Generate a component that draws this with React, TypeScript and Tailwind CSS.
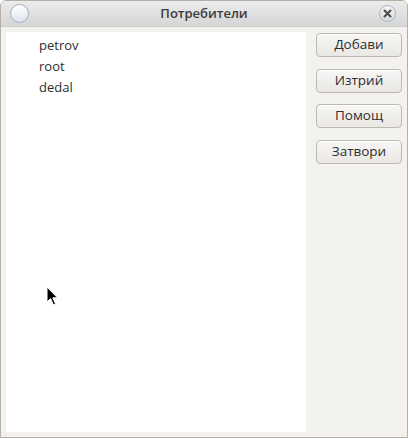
import React from "react";

const font = { fontFamily: '"Open Sans", "DejaVu Sans", sans-serif' };

function Btn({ label }: { label: string }) {
  return (
    <button className="h-[24px] w-[86px] rounded-[4px] border border-[#bcb9b3] bg-gradient-to-b from-[#f8f7f6] to-[#e9e7e3] text-[13.5px] text-[#2e2e2e] leading-none shadow-[inset_0_1px_0_#ffffff]">
      {label}
    </button>
  );
}

export default function App() {
  return (
    <div className="w-[408px] h-[438px] overflow-hidden" style={font}>
      <div className="relative flex h-full w-full flex-col rounded-t-[6px] border border-[#b3b0a9] bg-[#f4f2ef]">
        <div className="relative flex h-[26px] shrink-0 items-center justify-center rounded-t-[5px] bg-gradient-to-b from-[#ececec] to-[#d5d5d5] border-b border-[#cfcdc9]">
          <div className="absolute left-[9px] top-[3px] h-[19px] w-[19px] rounded-full border border-[#9fb0c8] bg-gradient-to-b from-[#ffffff] to-[#dfe3ea]" />
          <span className="text-[13px] font-semibold text-[#3c3c3c]">Потребители</span>
          <div className="absolute right-[11px] top-[4px] flex h-[17px] w-[17px] items-center justify-center rounded-full border border-[#a8b3c4] bg-gradient-to-b from-[#f4f4f4] to-[#d8dbe0]">
            <svg width="9" height="9" viewBox="0 0 9 9">
              <path d="M1.5 1.5 L7.5 7.5 M7.5 1.5 L1.5 7.5" stroke="#4a4a4a" strokeWidth="2" strokeLinecap="round" />
            </svg>
          </div>
        </div>
        <div className="flex flex-1 gap-[10px] pl-[5px] pr-[5px] pt-[5px] pb-[5px]">
          <div className="w-[300px] bg-white pl-[33px] pt-[3px] text-[13px] text-[#2e2e2e]">
            <div className="h-[21px] leading-[21px]">petrov</div>
            <div className="h-[21px] leading-[21px]">root</div>
            <div className="h-[21px] leading-[21px]">dedal</div>
          </div>
          <div className="flex flex-col gap-[11.5px] pt-[1px]">
            <Btn label="Добави" />
            <Btn label="Изтрий" />
            <Btn label="Помощ" />
            <Btn label="Затвори" />
          </div>
        </div>
        <svg className="absolute left-[45px] top-[285px]" width="14" height="22" viewBox="0 0 14 22">
          <path d="M1 1 L1 16 L4.5 12.5 L7.5 19 L9.5 18 L6.8 11.8 L11.5 11.8 Z" fill="#000" stroke="#fff" strokeWidth="1" />
        </svg>
      </div>
    </div>
  );
}
